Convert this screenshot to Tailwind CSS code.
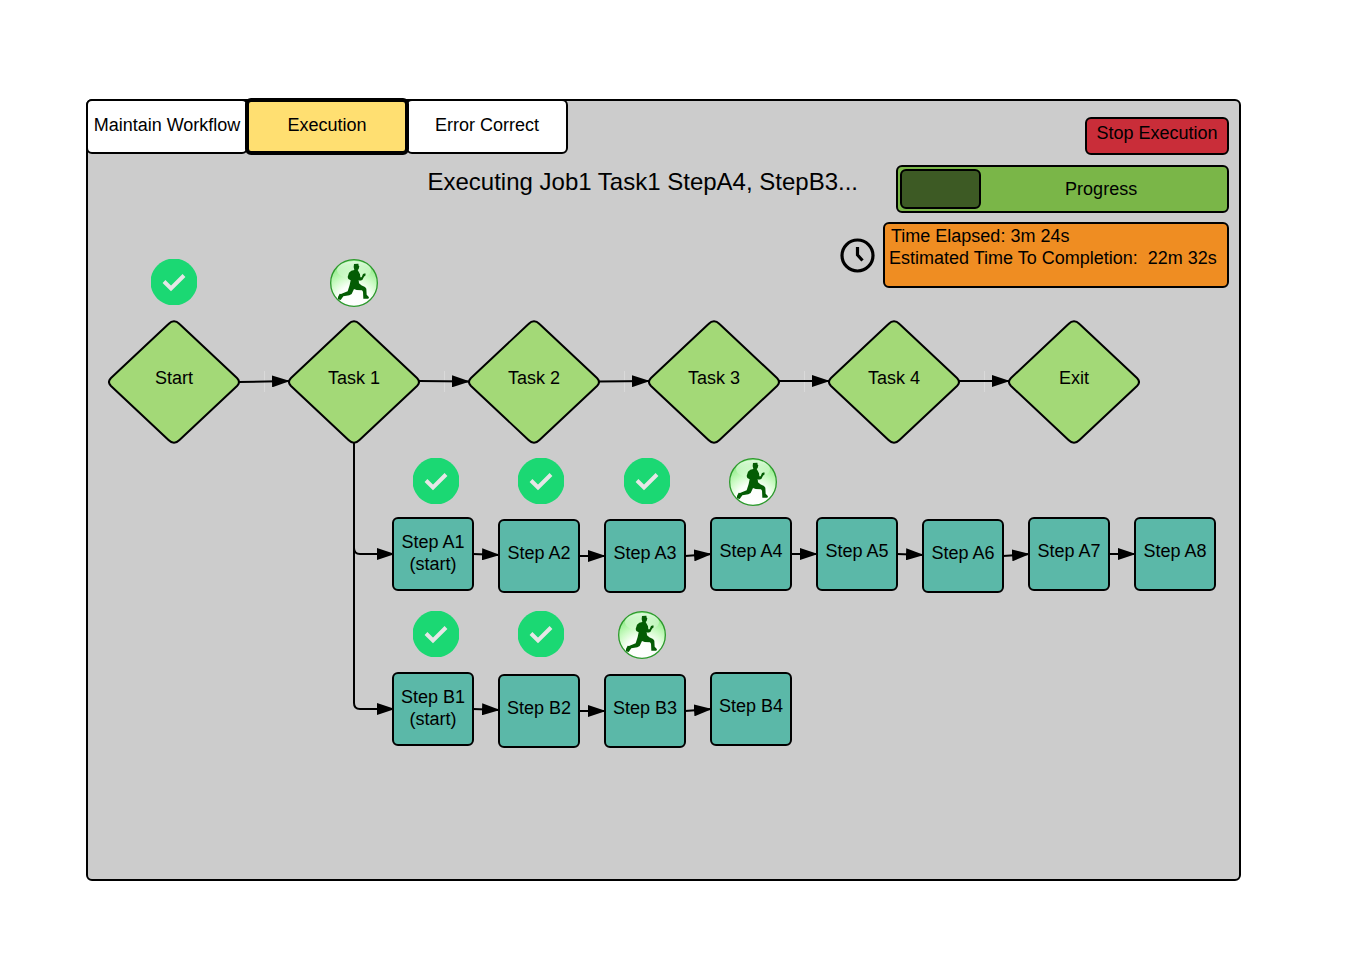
<!DOCTYPE html>
<html lang="en">
<head>
<meta charset="utf-8">
<meta name="viewport" content="width=device-width, initial-scale=1">
<title>Workflow Execution</title>
<script src="https://cdn.jsdelivr.net/npm/@tailwindcss/browser@4"></script>
</head>
<body class="min-h-screen bg-white font-['Liberation_Sans',Arial,sans-serif] text-lg/[22px] text-black">

<!-- Shared shapes -->
<svg class="absolute size-0" aria-hidden="true">
  <defs>
    <radialGradient id="glow" cx="50%" cy="92%" r="82%">
      <stop offset="0" stop-color="#ffffff"/>
      <stop offset="0.45" stop-color="#fbfffa"/>
      <stop offset="0.7" stop-color="#cdfbc6"/>
      <stop offset="1" stop-color="#93ee8b"/>
    </radialGradient>
    <linearGradient id="gloss" x1="0" y1="0" x2="0" y2="1">
      <stop offset="0" stop-color="#ffffff" stop-opacity="0.7"/>
      <stop offset="1" stop-color="#ffffff" stop-opacity="0.05"/>
    </linearGradient>
    <marker id="arrow" markerUnits="userSpaceOnUse" markerWidth="18" markerHeight="12" refX="18" refY="6" orient="auto">
      <path d="M0 0L18 6L0 12Z"/>
    </marker>
  </defs>
  <symbol id="diamond" viewBox="0 0 132 124">
    <path d="M60.5 4Q66 -1.5 71.5 4L129 58Q133 62 129 66L71.5 120Q66 125.5 60.5 120L3 66Q-1 62 3 58Z" fill="#a3d977" stroke="#000" stroke-width="2"/>
  </symbol>
  <symbol id="done" viewBox="0 0 46 46">
    <path d="M18 0H28C37 2 44 9 46 18V28C44 37 37 44 28 46H18C9 44 2 37 0 28V18C2 9 9 2 18 0Z" fill="#1bd873"/>
    <path d="M13 22.500L20 29.500L33 16.500" fill="none" stroke="#e6e6e6" stroke-width="4"/>
  </symbol>
  <symbol id="running" viewBox="0 0 144 144">
    <circle cx="72" cy="72" r="70" fill="url(#glow)" stroke="#2d9a2d" stroke-width="4"/>
    <ellipse cx="72" cy="33" rx="51" ry="27" fill="url(#gloss)"/>
    <path d="M72 15L85 14L86 20L88 22L86 30L83 33L86 38L90 46L91 55L95 55L99 45L106 43L107 49L102 53L97 63L89 65L86 62L87 73L94 79L105 84L109 89L110 107L117 115L115 119L100 119L99 98L96 94L80 93L72 90L65 105L58 109L40 112L32 123L24 121L24 114L29 104L33 105L53 97L59 78L62 64L55 60L53 54L57 41L64 35L73 33L71 24Z" fill="#045c04"/>
  </symbol>
</svg>

<div class="pt-[99px] pr-[104px] pb-[99px] pl-[86px]">
  <main class="min-h-[782px] rounded-md border-2 border-black bg-[#ccc]">

    <header class="flex flex-col gap-[10px] pr-[10px]">
      <div class="flex items-start justify-between">
        <nav class="-mt-[3px] -ml-0.5 flex items-center" aria-label="Sections">
          <button type="button" class="h-[55px] w-[162px] rounded-md border-2 border-black bg-white pb-1 whitespace-nowrap">Maintain Workflow</button>
          <button type="button" aria-current="page" class="z-10 -mx-[3px] h-[57px] w-[164px] rounded-md border-4 border-black bg-[#ffdf71] pb-1">Execution</button>
          <button type="button" class="h-[55px] w-[162px] rounded-md border-2 border-black bg-white pb-1">Error Correct</button>
        </nav>
        <button type="button" class="mt-4 h-[38px] w-[144px] rounded-md border-2 border-black bg-[#c92d39] pb-1.5 whitespace-nowrap">Stop Execution</button>
      </div>

      <div class="flex items-start justify-end gap-[38px]">
        <h1 class="text-2xl/[34px] whitespace-nowrap">Executing Job1 Task1 StepA4, StepB3...</h1>
        <div role="progressbar" aria-label="Progress" aria-valuenow="24" aria-valuemin="0" aria-valuemax="100" class="flex h-12 w-[333px] rounded-md border-2 border-black bg-[#7ab648] p-0.5">
          <div class="h-10 rounded-md border-2 border-black bg-[#3d5a24]" style="width:25%"></div>
          <div class="flex flex-1 items-center justify-center pr-1">Progress</div>
        </div>
      </div>

      <div class="-mt-px flex items-center justify-end gap-2">
        <svg class="size-9" viewBox="0 0 36 36" fill="none" stroke="#000" aria-hidden="true">
          <circle cx="18.500" cy="18.500" r="15.500" stroke-width="3.200"/>
          <path d="M18.500 10V18L23.500 23.500" stroke-width="3.200"/>
        </svg>
        <div class="h-[66px] w-[346px] rounded-md border-2 border-black bg-[#ef8d22] pt-px pl-1">
          <p class="pl-0.5">Time Elapsed: 3m 24s</p>
          <p class="whitespace-pre">Estimated Time To Completion:  22m 32s</p>
        </div>
      </div>
    </header>

    <!-- Free canvas: workflow nodes and their connectors -->
    <section class="relative h-[590px] w-[1151px]" aria-label="Workflow diagram">
      <svg class="absolute inset-0 size-full" viewBox="0 0 1151 590" fill="none" stroke="#000" stroke-width="2" aria-hidden="true">
        <path d="M176.500 83V104M356.500 83V104M536.500 83V104M716.500 83V104M896.500 83V104" stroke="#d9d9d9" stroke-width="1"/>
        <path marker-end="url(#arrow)" d="M151 94L202 93"/>
        <path marker-end="url(#arrow)" d="M331 93L382 93.500"/>
        <path marker-end="url(#arrow)" d="M511 93.500L562 93"/>
        <path marker-end="url(#arrow)" d="M691 93H742"/>
        <path marker-end="url(#arrow)" d="M871 93H922"/>
        <path marker-end="url(#arrow)" d="M266 154V260Q266 266 272 266H307"/>
        <path marker-end="url(#arrow)" d="M266 154V415Q266 421 272 421H307"/>
        <path marker-end="url(#arrow)" d="M385 266L412 267"/>
        <path marker-end="url(#arrow)" d="M491 268H518"/>
        <path marker-end="url(#arrow)" d="M597 268L624 266"/>
        <path marker-end="url(#arrow)" d="M703 266H730"/>
        <path marker-end="url(#arrow)" d="M809 266L836 267"/>
        <path marker-end="url(#arrow)" d="M915 268L942 266"/>
        <path marker-end="url(#arrow)" d="M1021 266H1048"/>
        <path marker-end="url(#arrow)" d="M385 421L412 422"/>
        <path marker-end="url(#arrow)" d="M491 423H518"/>
        <path marker-end="url(#arrow)" d="M597 423L624 421"/>
      </svg>

      <div class="absolute top-8 left-5 flex h-[124px] w-[132px] items-center justify-center pb-2"><svg class="absolute inset-0 size-full"><use href="#diamond"/></svg><span class="relative">Start</span></div>
      <div class="absolute top-8 left-[200px] flex h-[124px] w-[132px] items-center justify-center pb-2"><svg class="absolute inset-0 size-full"><use href="#diamond"/></svg><span class="relative">Task 1</span></div>
      <div class="absolute top-8 left-[380px] flex h-[124px] w-[132px] items-center justify-center pb-2"><svg class="absolute inset-0 size-full"><use href="#diamond"/></svg><span class="relative">Task 2</span></div>
      <div class="absolute top-8 left-[560px] flex h-[124px] w-[132px] items-center justify-center pb-2"><svg class="absolute inset-0 size-full"><use href="#diamond"/></svg><span class="relative">Task 3</span></div>
      <div class="absolute top-8 left-[740px] flex h-[124px] w-[132px] items-center justify-center pb-2"><svg class="absolute inset-0 size-full"><use href="#diamond"/></svg><span class="relative">Task 4</span></div>
      <div class="absolute top-8 left-[920px] flex h-[124px] w-[132px] items-center justify-center pb-2"><svg class="absolute inset-0 size-full"><use href="#diamond"/></svg><span class="relative">Exit</span></div>

      <div class="absolute top-[229px] left-[304px] flex h-[74px] w-[82px] items-center justify-center rounded-md border-2 border-black bg-[#5bb8a8] pb-0.5 text-center">Step A1<br>(start)</div>
      <div class="absolute top-[231px] left-[410px] flex h-[74px] w-[82px] items-center justify-center rounded-md border-2 border-black bg-[#5bb8a8] pb-1.5">Step A2</div>
      <div class="absolute top-[231px] left-[516px] flex h-[74px] w-[82px] items-center justify-center rounded-md border-2 border-black bg-[#5bb8a8] pb-1.5">Step A3</div>
      <div class="absolute top-[229px] left-[622px] flex h-[74px] w-[82px] items-center justify-center rounded-md border-2 border-black bg-[#5bb8a8] pb-1.5">Step A4</div>
      <div class="absolute top-[229px] left-[728px] flex h-[74px] w-[82px] items-center justify-center rounded-md border-2 border-black bg-[#5bb8a8] pb-1.5">Step A5</div>
      <div class="absolute top-[231px] left-[834px] flex h-[74px] w-[82px] items-center justify-center rounded-md border-2 border-black bg-[#5bb8a8] pb-1.5">Step A6</div>
      <div class="absolute top-[229px] left-[940px] flex h-[74px] w-[82px] items-center justify-center rounded-md border-2 border-black bg-[#5bb8a8] pb-1.5">Step A7</div>
      <div class="absolute top-[229px] left-[1046px] flex h-[74px] w-[82px] items-center justify-center rounded-md border-2 border-black bg-[#5bb8a8] pb-1.5">Step A8</div>

      <div class="absolute top-[384px] left-[304px] flex h-[74px] w-[82px] items-center justify-center rounded-md border-2 border-black bg-[#5bb8a8] pb-0.5 text-center">Step B1<br>(start)</div>
      <div class="absolute top-[386px] left-[410px] flex h-[74px] w-[82px] items-center justify-center rounded-md border-2 border-black bg-[#5bb8a8] pb-1.5">Step B2</div>
      <div class="absolute top-[386px] left-[516px] flex h-[74px] w-[82px] items-center justify-center rounded-md border-2 border-black bg-[#5bb8a8] pb-1.5">Step B3</div>
      <div class="absolute top-[384px] left-[622px] flex h-[74px] w-[82px] items-center justify-center rounded-md border-2 border-black bg-[#5bb8a8] pb-1.5">Step B4</div>

      <svg class="absolute -top-[29px] left-[63px] size-[46px]" role="img" aria-label="Done"><use href="#done"/></svg>
      <svg class="absolute -top-[29px] left-[242px] size-12" role="img" aria-label="Running"><use href="#running"/></svg>
      <svg class="absolute top-[170px] left-[325px] size-[46px]" role="img" aria-label="Done"><use href="#done"/></svg>
      <svg class="absolute top-[170px] left-[430px] size-[46px]" role="img" aria-label="Done"><use href="#done"/></svg>
      <svg class="absolute top-[170px] left-[536px] size-[46px]" role="img" aria-label="Done"><use href="#done"/></svg>
      <svg class="absolute top-[170px] left-[641px] size-12" role="img" aria-label="Running"><use href="#running"/></svg>
      <svg class="absolute top-[323px] left-[325px] size-[46px]" role="img" aria-label="Done"><use href="#done"/></svg>
      <svg class="absolute top-[323px] left-[430px] size-[46px]" role="img" aria-label="Done"><use href="#done"/></svg>
      <svg class="absolute top-[323px] left-[530px] size-12" role="img" aria-label="Running"><use href="#running"/></svg>
    </section>
  </main>
</div>
</body>
</html>
